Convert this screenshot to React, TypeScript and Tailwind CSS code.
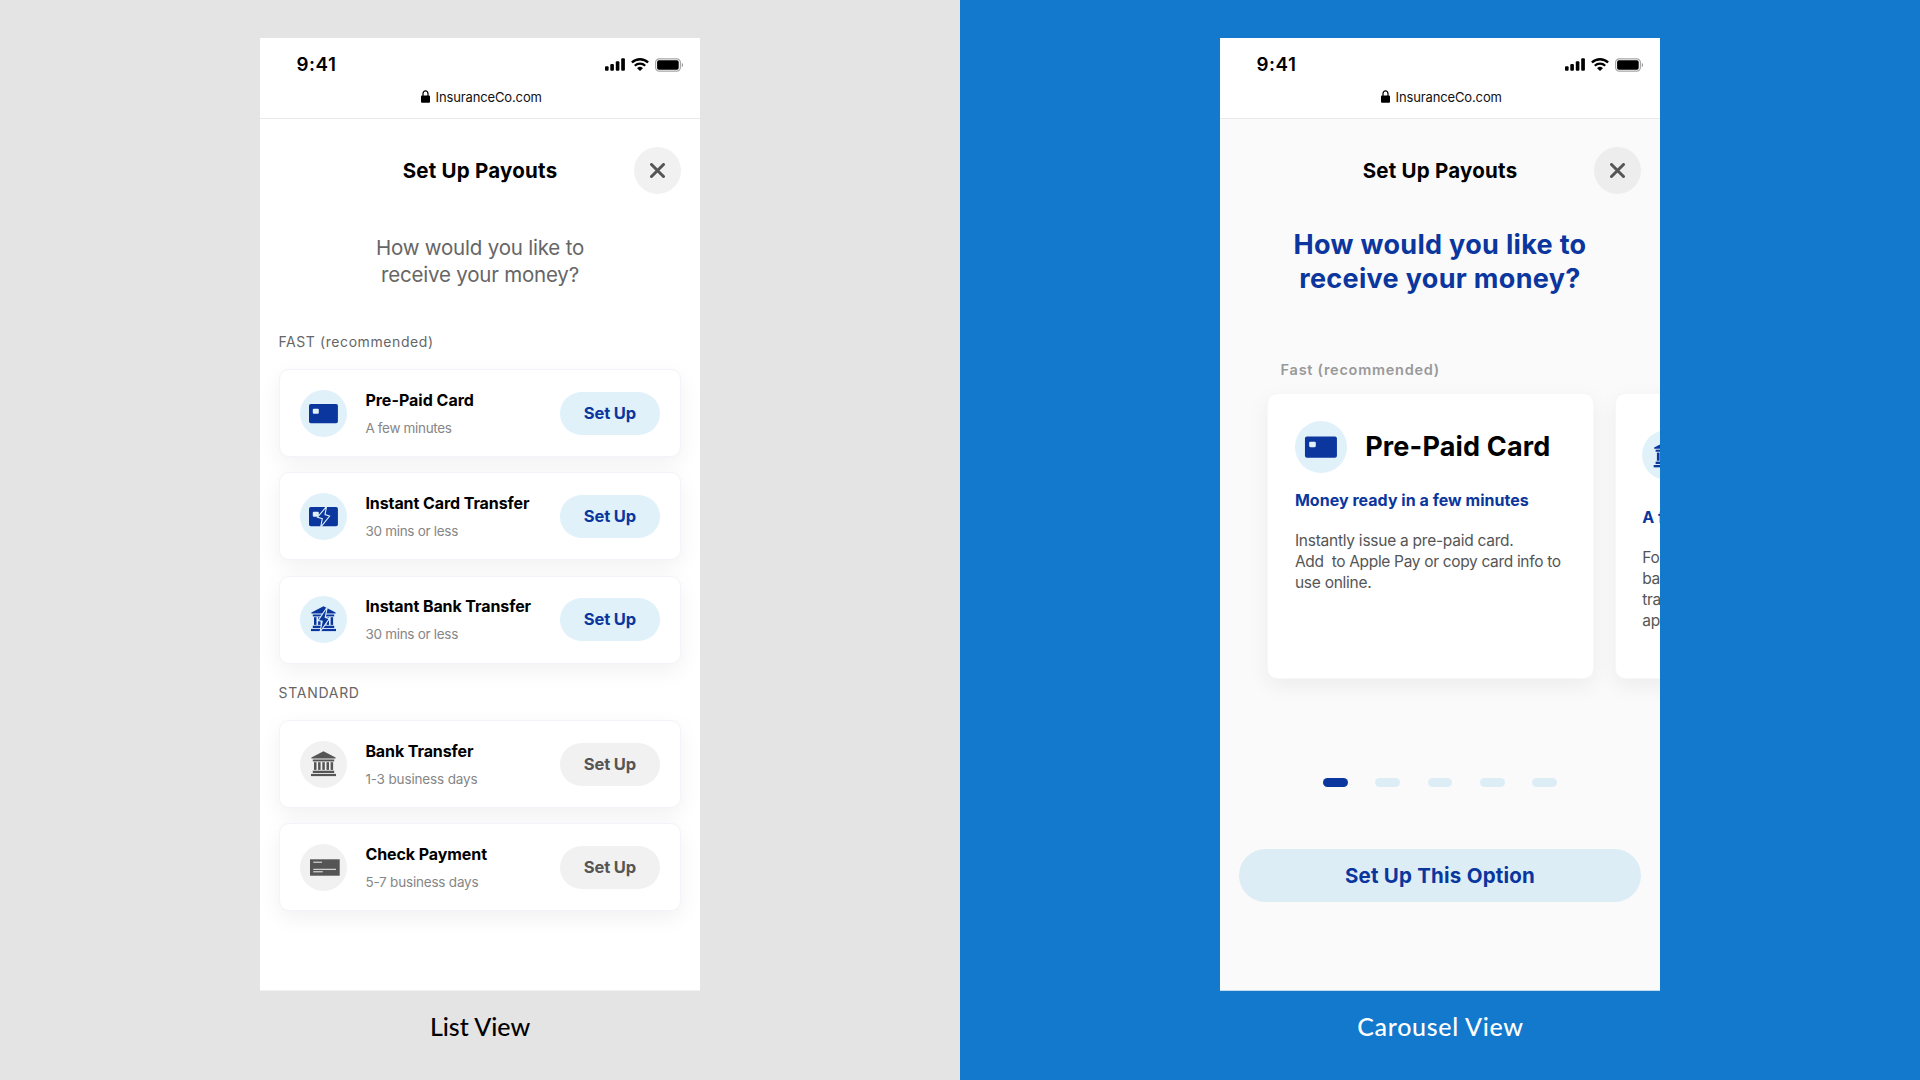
import React from "react";

const BLUE = "#0a369d";
const GREY = "#555555";

function SignalIcon() {
  return (
    <svg width="20" height="13" viewBox="0 0 20 13" fill="#000">
      <rect x="0" y="8.3" width="3.6" height="4.5" rx="1" />
      <rect x="5.3" y="6" width="3.6" height="6.8" rx="1" />
      <rect x="10.8" y="3.3" width="3.6" height="9.5" rx="1" />
      <rect x="16.2" y="0.2" width="3.7" height="12.6" rx="1" />
    </svg>
  );
}

function WifiIcon() {
  return (
    <svg width="18" height="13" viewBox="0 0 18 13">
      <path d="M0.9 4.5 A11.6 11.6 0 0 1 17.1 4.5" fill="none" stroke="#000" strokeWidth="2.4" />
      <path d="M3.8 7.7 A7.4 7.4 0 0 1 14.2 7.7" fill="none" stroke="#000" strokeWidth="2.3" />
      <path d="M9 13 L6.1 10.2 A4.1 4.1 0 0 1 11.9 10.2 Z" fill="#000" />
    </svg>
  );
}

function BatteryIcon() {
  return (
    <svg width="29" height="14" viewBox="0 0 29 14">
      <rect x="0.6" y="0.8" width="24.8" height="12.4" rx="3.6" fill="none" stroke="#000" strokeOpacity="0.35" strokeWidth="1.2" />
      <rect x="2.1" y="2.3" width="21.6" height="9.4" rx="1.8" fill="#000" />
      <path d="M26.8 4.8 C28.6 5.6 28.6 8.4 26.8 9.2 Z" fill="#000" fillOpacity="0.4" />
    </svg>
  );
}

function LockIcon() {
  return (
    <svg width="9" height="13" viewBox="0 0 9 13">
      <path d="M2 6.5 V3.7 A2.5 2.9 0 0 1 7 3.7 V6.5" fill="none" stroke="#000" strokeWidth="1.2" />
      <rect x="0" y="5.6" width="9" height="7.2" rx="1.1" fill="#000" />
    </svg>
  );
}

function CloseIcon() {
  return (
    <svg width="15" height="15" viewBox="0 0 15 15">
      <path d="M1.5 1.5 L13.5 13.5 M13.5 1.5 L1.5 13.5" stroke={GREY} strokeWidth="3" strokeLinecap="round" />
    </svg>
  );
}

type IconName = "card" | "instant-card" | "instant-bank" | "bank" | "check";

function OptionIcon({ name, size = 47 }: { name: IconName; size?: number }) {
  const muted = name === "bank" || name === "check";
  const color = muted ? GREY : BLUE;
  const back = muted ? "#f1f1f1" : "#e0f1fa";
  return (
    <svg className="shrink-0" width={size} height={size} viewBox="0 0 47 47" fill={color}>
      <circle cx="23.5" cy="23.5" r="23.5" fill={back} />
      {(name === "card" || name === "instant-card") && (
        <>
          <rect x="9" y="14" width="28.9" height="19.2" rx="1.8" />
          <rect x="12.8" y="18.7" width="6" height="5" rx="1" fill={back} />
        </>
      )}
      {name === "instant-card" && (
        <path d="M26.6 13.4 L17.5 24.2 L22.3 25.6 L20.6 34.3 L29.6 23 L25 21.6 Z" stroke={back} strokeWidth="1.1" />
      )}
      {(name === "bank" || name === "instant-bank") && (
        <>
          <path d="M23.5 10.3 L35.6 16.4 V17.6 H11.4 V16.4 Z" />
          <rect x="12.8" y="18.5" width="21.4" height="1.9" />
          <rect x="14" y="21.2" width="2.5" height="7.7" />
          <rect x="18.1" y="21.2" width="2.5" height="7.7" />
          <rect x="22.3" y="21.2" width="2.5" height="7.7" />
          <rect x="26.5" y="21.2" width="2.5" height="7.7" />
          <rect x="30.6" y="21.2" width="2.5" height="7.7" />
          <rect x="12.8" y="29.7" width="21.4" height="2.3" />
          <rect x="11" y="32.9" width="25" height="2.2" />
        </>
      )}
      {name === "instant-bank" && (
        <path d="M27.4 10.8 L18 24.6 L22.2 25.2 L20 36 L29.4 22.6 L25.2 21.4 Z" stroke={back} strokeWidth="1.1" />
      )}
      {name === "check" && (
        <>
          <rect x="10" y="15.3" width="29.7" height="16.4" />
          <path d="M13.3 18.2 H22 M13.3 25.3 H36 M13.3 27.8 H22.8" stroke={back} strokeWidth="1" />
        </>
      )}
    </svg>
  );
}

function BrowserHeader() {
  return (
    <header className="h-[81px] shrink-0 border-b border-[#e9e9e9] bg-white">
      <div className="flex h-[38.8px] items-start justify-between pt-[14.6px] pr-[16.4px] pl-[36.6px]">
        <span className="text-[18.8px] leading-[24px] font-semibold tracking-[0.5px] text-black">9:41</span>
        <div className="flex items-start gap-[5.7px] pt-[5.8px]">
          <SignalIcon />
          <WifiIcon />
          <div className="-mt-[0.5px]">
            <BatteryIcon />
          </div>
        </div>
      </div>
      <div className="mt-[12px] flex h-[16px] items-center justify-center gap-[6px] pl-[2.4px]">
        <LockIcon />
        <span className="text-[13px] leading-[16px] tracking-[-0.13px] text-[#111]">InsuranceCo.com</span>
      </div>
    </header>
  );
}

function TitleBar({ closeClass }: { closeClass: string }) {
  return (
    <div className="mt-[28px] grid h-[47px] grid-cols-[1fr_auto_1fr] items-center pr-[19px] pl-[19px]">
      <span />
      <h1 className="text-[20.5px] leading-[47px] font-[650] tracking-[0.23px] text-black">Set Up Payouts</h1>
      <button className={`flex size-[47px] items-center justify-center justify-self-end rounded-full ${closeClass}`}>
        <CloseIcon />
      </button>
    </div>
  );
}

interface Option {
  icon: IconName;
  title: string;
  time: string;
  titleClass: string;
  timeClass: string;
}

const fast: Option[] = [
  { icon: "card", title: "Pre-Paid Card", time: "A few minutes", titleClass: "tracking-normal", timeClass: "tracking-[-0.33px]" },
  { icon: "instant-card", title: "Instant Card Transfer", time: "30 mins or less", titleClass: "tracking-[-0.08px]", timeClass: "tracking-[-0.29px]" },
  { icon: "instant-bank", title: "Instant Bank Transfer", time: "30 mins or less", titleClass: "tracking-[-0.09px]", timeClass: "tracking-[-0.29px]" },
];

const standard: Option[] = [
  { icon: "bank", title: "Bank Transfer", time: "1-3 business days", titleClass: "tracking-[-0.1px]", timeClass: "tracking-[-0.15px]" },
  { icon: "check", title: "Check Payment", time: "5-7 business days", titleClass: "tracking-[-0.08px]", timeClass: "tracking-[-0.2px]" },
];

function OptionRow({ option, muted }: { option: Option; muted?: boolean }) {
  return (
    <li className="flex h-[88px] items-center rounded-[10px] border border-[#f3f3fa] bg-white pr-[20px] pl-[19.7px] shadow-[0_7px_22px_rgba(0,0,0,0.06)]">
      <OptionIcon name={option.icon} />
      <div className="ml-[18.4px] flex-1">
        <p className={`text-[16px] leading-[20px] font-[650] text-black ${option.titleClass}`}>{option.title}</p>
        <p className={`mt-[9px] text-[13.5px] leading-[18px] text-[#868686] ${option.timeClass}`}>{option.time}</p>
      </div>
      <button
        className={`h-[43px] w-[99.5px] rounded-[21.5px] text-[16.5px] leading-[43px] font-[650] tracking-[-0.15px] ${
          muted ? "bg-[#f1f1f1] text-[#555]" : "bg-[#e0f1fa] text-[#0a369d]"
        }`}
      >
        Set Up
      </button>
    </li>
  );
}

function ListPhone() {
  return (
    <div className="flex h-[953px] w-[440px] flex-col overflow-hidden border-b border-[#f2f2f2] bg-white">
      <BrowserHeader />
      <TitleBar closeClass="bg-[#f1f1f1]" />
      <h2 className="mt-[40.3px] text-center text-[20.5px] leading-[27px] tracking-[-0.2px] text-[#666]">
        How would you like to
        <br />
        receive your money?
      </h2>
      <div className="px-[19.3px]">
        <p className="mt-[43.6px] -ml-[0.9px] text-[14px] leading-[20px] tracking-[0.59px] text-[#666]">FAST (recommended)</p>
        <ul className="mt-[17.2px] flex flex-col gap-[15.25px]">
          {fast.map((o) => (
            <OptionRow key={o.title} option={o} />
          ))}
        </ul>
        <p className="mt-[19.1px] -ml-[0.7px] text-[14px] leading-[20px] tracking-[0.7px] text-[#666]">STANDARD</p>
        <ul className="mt-[17.4px] flex flex-col gap-[15.25px]">
          {standard.map((o) => (
            <OptionRow key={o.title} option={o} muted />
          ))}
        </ul>
      </div>
    </div>
  );
}

function CarouselPhone() {
  return (
    <div className="flex h-[953px] w-[440px] flex-col overflow-hidden border-b border-[#c3daec] bg-[#fafafa]">
      <BrowserHeader />
      <TitleBar closeClass="bg-[#ededed]" />
      <h2 className="mt-[33.9px] text-center text-[27px] leading-[34px] font-[650] tracking-[0.32px] text-[#0a369d]">
        How would you like to
        <br />
        receive your money?
      </h2>
      <p className="mt-[64.2px] pl-[60.6px] text-[14.5px] leading-[20px] font-semibold tracking-[0.74px] text-[#999]">Fast (recommended)</p>
      <div className="mt-[13.2px] flex gap-[20.5px] pl-[47.4px]">
        <article className="h-[286px] w-[327px] shrink-0 rounded-[10px] border border-[#f6f6fb] bg-white pt-[25.9px] pl-[26.5px] shadow-[0_7px_22px_rgba(0,0,0,0.06)]">
          <div className="flex items-center">
            <OptionIcon name="card" size={52} />
            <h3 className="ml-[18.3px] pt-px text-[27px] leading-[52px] font-[650] tracking-[0.17px] text-black">Pre-Paid Card</h3>
          </div>
          <p className="mt-[17.2px] text-[16px] leading-[20px] font-[650] tracking-[0.03px] text-[#0a369d]">Money ready in a few minutes</p>
          <p className="mt-[19.6px] text-[15.5px] leading-[21.2px] whitespace-pre text-[#555]">
            <span className="tracking-[-0.25px]">Instantly issue a pre-paid card.</span>
            <br />
            <span className="tracking-[-0.33px]">{"Add  to Apple Pay or copy card info to"}</span>
            <br />
            <span className="tracking-[-0.25px]">use online.</span>
          </p>
        </article>
        <article className="h-[286px] w-[327px] shrink-0 rounded-[10px] border border-[#f6f6fb] bg-white pt-[35.4px] pl-[26.3px] shadow-[0_7px_22px_rgba(0,0,0,0.06)]">
          <OptionIcon name="instant-bank" size={50} />
          <p className="mt-[27.4px] text-[16px] leading-[20px] font-[650] tracking-normal text-[#0a369d]">A few minutes</p>
          <p className="mt-[19.6px] text-[15.5px] leading-[21.2px] tracking-[-0.25px] text-[#555]">
            For
            <br />
            bank
            <br />
            transfer
            <br />
            apply
          </p>
        </article>
      </div>
      <div className="mt-[98.7px] flex justify-center gap-[27.8px]">
        <span className="h-[9px] w-[24.5px] rounded-full bg-[#0a369d]" />
        <span className="h-[9px] w-[24.5px] rounded-full bg-[#dcedf6]" />
        <span className="h-[9px] w-[24.5px] rounded-full bg-[#dcedf6]" />
        <span className="h-[9px] w-[24.5px] rounded-full bg-[#dcedf6]" />
        <span className="h-[9px] w-[24.5px] rounded-full bg-[#dcedf6]" />
      </div>
      <button className="mx-auto mt-[62.1px] h-[53.3px] w-[402.5px] shrink-0 rounded-full bg-[#dcedf6] text-[20.5px] leading-[53.3px] font-[650] tracking-[0.22px] text-[#0a369d]">
        Set Up This Option
      </button>
    </div>
  );
}

export default function App() {
  return (
    <main className="grid h-[1080px] w-[1920px] grid-cols-2 overflow-hidden font-['Inter',sans-serif]">
      <section className="flex flex-col items-center bg-[#e4e4e4] pt-[38px]">
        <ListPhone />
        <p className="mt-[20.3px] font-['Lato',sans-serif] text-[25px] leading-[30px] font-medium tracking-normal text-black">List View</p>
      </section>
      <section className="flex flex-col items-center bg-[#1279cd] pt-[38px]">
        <CarouselPhone />
        <p className="mt-[20.3px] pl-[1px] font-['Lato',sans-serif] text-[25px] leading-[30px] font-medium tracking-[0.7px] text-white">Carousel View</p>
      </section>
    </main>
  );
}
